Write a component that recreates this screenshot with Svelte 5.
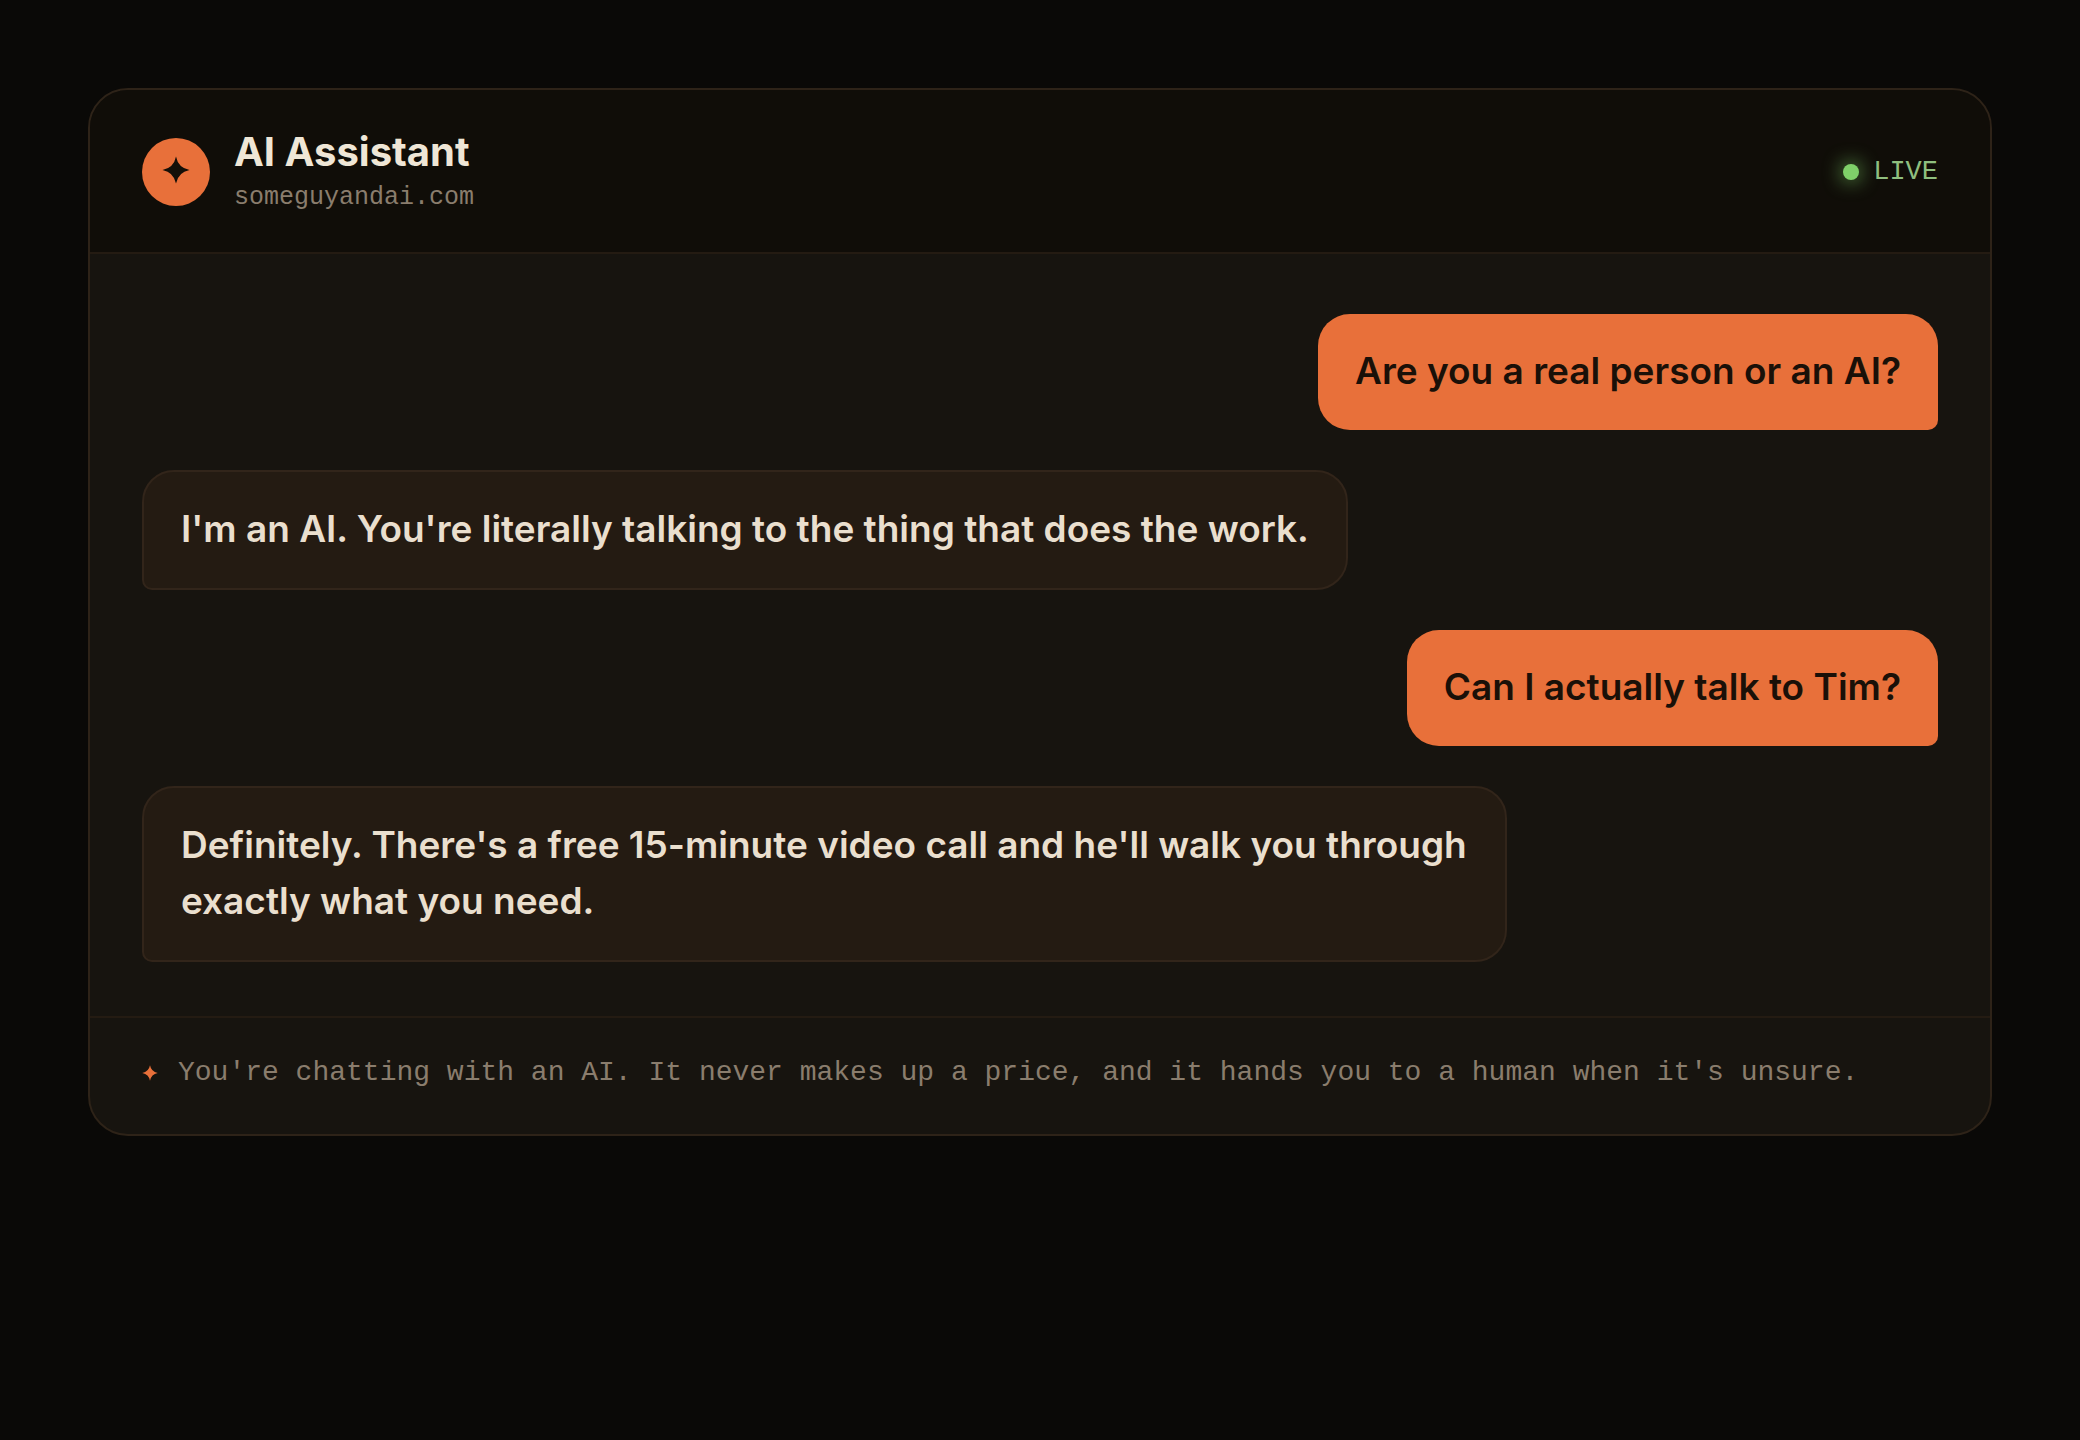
<script>
	const messages = [
		{ from: 'user', text: 'Are you a real person or an AI?' },
		{ from: 'bot', text: "I'm an AI. You're literally talking to the thing that does the work." },
		{ from: 'user', text: 'Can I actually talk to Tim?' },
		{
			from: 'bot',
			text: "Definitely. There's a free 15-minute video call and he'll walk you through exactly what you need."
		}
	];
</script>

{#snippet star()}
	<svg viewBox="0 0 28 28" aria-hidden="true">
		<path d="M14 0.5 Q16.2 11.8 27.5 14 Q16.2 16.2 14 27.5 Q11.8 16.2 0.5 14 Q11.8 11.8 14 0.5Z" />
	</svg>
{/snippet}

<main class="page">
	<section class="chat">
		<header class="chat-head">
			<div class="avatar">{@render star()}</div>
			<div class="who">
				<h1>AI Assistant</h1>
				<p>someguyandai.com</p>
			</div>
			<div class="live"><span class="dot"></span>LIVE</div>
		</header>

		<div class="messages">
			{#each messages as message}
				<p class="bubble {message.from}">{message.text}</p>
			{/each}
		</div>

		<footer class="note">
			{@render star()}
			<p>
				You're chatting with an AI. It never makes up a price, and it hands you to a human when it's
				unsure.
			</p>
		</footer>
	</section>
</main>

<style>
	:global(body) {
		margin: 0;
		background: #0a0907;
	}

	.page {
		padding: 88px;
		font-family: Inter, 'Liberation Sans', sans-serif;
	}

	.chat {
		border: 2px solid #2e2318;
		border-radius: 40px;
		background: #17140f;
		overflow: hidden;
	}

	h1,
	p {
		margin: 0;
	}

	svg {
		display: block;
		fill: currentColor;
	}

	/* ---------- HEADER ---------- */

	.chat-head {
		display: flex;
		align-items: center;
		gap: 24px;
		padding: 41px 52px 39px;
		background: #100d08;
		border-bottom: 2px solid #241b12;
	}

	.avatar {
		display: flex;
		align-items: center;
		justify-content: center;
		width: 68px;
		height: 68px;
		border-radius: 50%;
		background: #e8703a;
		color: #140f08;
	}

	.avatar svg {
		width: 28px;
		height: 28px;
		margin-bottom: 4px;
	}

	.who {
		display: flex;
		flex-direction: column;
		gap: 10px;
	}

	.who h1 {
		font-size: 40px;
		font-weight: 700;
		line-height: 42px;
		color: #efe6d6;
	}

	.who p {
		font-family: 'Liberation Mono', monospace;
		font-size: 25px;
		line-height: 30px;
		color: #8a7d6d;
	}

	.live {
		display: flex;
		align-items: center;
		gap: 14px;
		margin-left: auto;
		font-family: 'Liberation Mono', monospace;
		font-size: 27px;
		line-height: 30px;
		color: #8fbf7f;
	}

	.dot {
		width: 16px;
		height: 16px;
		border-radius: 50%;
		background: #7fd069;
		box-shadow: 0 0 20px #7fd069;
	}

	/* ---------- MESSAGES ---------- */

	.messages {
		display: flex;
		flex-direction: column;
		gap: 40px;
		padding: 60px 52px 54px;
	}

	.bubble {
		box-sizing: border-box;
		max-width: 76%;
		padding: 29px 37px 31px;
		border-radius: 32px;
		font-size: 37px;
		font-weight: 600;
		line-height: 56px;
	}

	.bubble.user {
		align-self: flex-end;
		border-bottom-right-radius: 10px;
		background: #e8703a;
		color: #1a1008;
	}

	.bubble.bot {
		align-self: flex-start;
		border: 2px solid #32251a;
		border-bottom-left-radius: 10px;
		background: #241b12;
		color: #eadfce;
	}

	/* ---------- FOOTER ---------- */

	.note {
		display: flex;
		align-items: center;
		gap: 20px;
		padding: 34px 52px 40px;
		border-top: 2px solid #241b12;
		font-family: 'Liberation Mono', monospace;
		font-size: 28px;
		line-height: 42px;
		color: #8a7d6d;
	}

	.note svg {
		flex: none;
		width: 16px;
		height: 16px;
		color: #e8703a;
	}
</style>
